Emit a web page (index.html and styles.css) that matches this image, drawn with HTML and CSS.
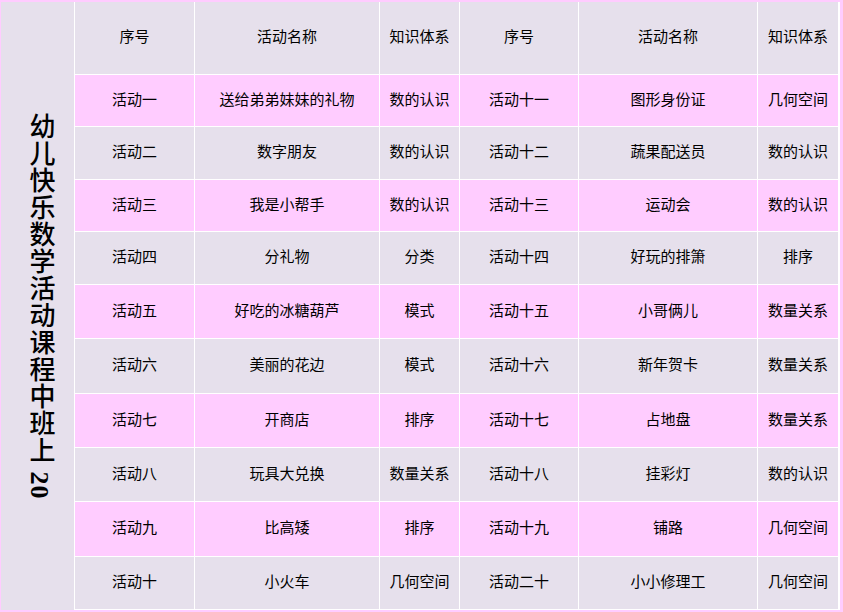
FILE: index.html
```html
<!DOCTYPE html>
<html lang="zh-CN">
<head>
<meta charset="utf-8">
<title>幼儿快乐数学活动课程中班上</title>
<link rel="stylesheet" href="styles.css">
</head>
<body>
<div class="sheet">
  <div class="title"><span class="title-text">幼儿快乐数学活动课程中班上 <span class="num">20</span></span></div>

  <div class="c head">序号</div><div class="c head">活动名称</div><div class="c head">知识体系</div><div class="c head">序号</div><div class="c head">活动名称</div><div class="c head">知识体系</div>

  <div class="c pink">活动一</div><div class="c pink">送给弟弟妹妹的礼物</div><div class="c pink">数的认识</div><div class="c pink">活动十一</div><div class="c pink">图形身份证</div><div class="c pink">几何空间</div>

  <div class="c lav">活动二</div><div class="c lav">数字朋友</div><div class="c lav">数的认识</div><div class="c lav">活动十二</div><div class="c lav">蔬果配送员</div><div class="c lav">数的认识</div>

  <div class="c pink">活动三</div><div class="c pink">我是小帮手</div><div class="c pink">数的认识</div><div class="c pink">活动十三</div><div class="c pink">运动会</div><div class="c pink">数的认识</div>

  <div class="c lav">活动四</div><div class="c lav">分礼物</div><div class="c lav">分类</div><div class="c lav">活动十四</div><div class="c lav">好玩的排箫</div><div class="c lav">排序</div>

  <div class="c pink">活动五</div><div class="c pink">好吃的冰糖葫芦</div><div class="c pink">模式</div><div class="c pink">活动十五</div><div class="c pink">小哥俩儿</div><div class="c pink">数量关系</div>

  <div class="c lav">活动六</div><div class="c lav">美丽的花边</div><div class="c lav">模式</div><div class="c lav">活动十六</div><div class="c lav">新年贺卡</div><div class="c lav">数量关系</div>

  <div class="c pink">活动七</div><div class="c pink">开商店</div><div class="c pink">排序</div><div class="c pink">活动十七</div><div class="c pink">占地盘</div><div class="c pink">数量关系</div>

  <div class="c lav">活动八</div><div class="c lav">玩具大兑换</div><div class="c lav">数量关系</div><div class="c lav">活动十八</div><div class="c lav">挂彩灯</div><div class="c lav">数的认识</div>

  <div class="c pink">活动九</div><div class="c pink">比高矮</div><div class="c pink">排序</div><div class="c pink">活动十九</div><div class="c pink">铺路</div><div class="c pink">几何空间</div>

  <div class="c lav">活动十</div><div class="c lav">小火车</div><div class="c lav">几何空间</div><div class="c lav">活动二十</div><div class="c lav">小小修理工</div><div class="c lav">几何空间</div>
</div>
</body>
</html>
```
FILE: styles.css
```css
html, body {
  margin: 0;
  padding: 0;
  background: #ffccff;
}
body {
  width: 843px;
  height: 612px;
  overflow: hidden;
  font-family: "Noto Sans CJK SC", "Liberation Sans", sans-serif;
}
.sheet {
  margin: 2px 0 0 1px;
  width: 838px;
  display: grid;
  grid-template-columns: 73px 119px 184px 79px 118px 178px 80px;
  grid-template-rows: 72px 51px 52px 51px 52px 53px 54px 53px 53px 54px 52px;
  column-gap: 1px;
  row-gap: 1px;
  padding: 0 1px 1px 0;
  background: #ffffff;
}
.title {
  grid-column: 1;
  grid-row: 1 / span 11;
  margin-bottom: -1px;
  background: #e6e0ec;
  writing-mode: vertical-rl;
  display: flex;
  align-items: center;
  justify-content: center;
  font-family: "Liberation Serif", "Noto Sans CJK SC", serif;
  font-size: 26px;
  font-weight: 500;
  line-height: 1;
  letter-spacing: 1px;
  color: #000;
  padding-left: 3px;
}
.title-text {
  white-space: nowrap;
}
.title .num {
  font-weight: 700;
}
.c {
  display: flex;
  align-items: center;
  justify-content: center;
  font-size: 15px;
  line-height: 1;
  padding-bottom: 5px;
  color: #000;
  white-space: nowrap;
}
.head, .lav { background: #e6e0ec; }
.pink { background: #ffccff; }
```
